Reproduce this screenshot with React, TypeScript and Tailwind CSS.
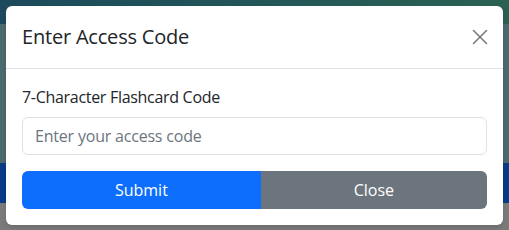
import { X } from "lucide-react";

const FONT = "font-['Open_Sans','Noto_Sans',sans-serif]";

export default function App() {
  return (
    <div className={`relative w-[509px] h-[230px] overflow-hidden bg-[#7b7b7b] ${FONT}`}>
      {/* dimmed page behind the modal */}
      <div className="h-[24px] bg-gradient-to-r from-[#1c4a5c] to-[#2b6152]" />
      <div className="h-[139px] bg-[#4b6b6f]" />
      <div className="h-[40px] bg-[#0c3b85]" />
      <div className="h-[27px] bg-[#7b7b7b]" />

      {/* modal */}
      <div className="absolute left-[6px] top-[6px] w-[497px] rounded-[6px] bg-white shadow-md">
        <div className="flex items-center justify-between border-b border-[#dee2e6] px-4 py-4">
          <h5 className="text-[20px] leading-[30px] font-medium tracking-[-0.2px] text-[#212529]">Enter Access Code</h5>
          <button className="-mr-2 flex h-[30px] w-[30px] items-center justify-center text-[#7a7a7a]" aria-label="Close">
            <X size={26} strokeWidth={1.4} />
          </button>
        </div>
        <div className="p-4">
          <label className="mb-2 block text-[16px] leading-6 tracking-[-0.3px] text-[#212529]">7-Character Flashcard Code</label>
          <input
            type="text"
            placeholder="Enter your access code"
            className="mb-4 block h-[38px] w-full rounded-[6px] border border-[#dee2e6] px-3 text-[16px] tracking-[-0.2px] text-[#212529] outline-none placeholder:text-[#6c757d]"
          />
          <div className="flex">
            <button className="flex-auto h-[38px] rounded-l-[6px] bg-[#0d6efd] px-3 text-[16px] text-white">Submit</button>
            <button className="flex-auto h-[38px] rounded-r-[6px] bg-[#6c757d] px-3 text-[16px] text-white">Close</button>
          </div>
        </div>
      </div>
    </div>
  );
}
